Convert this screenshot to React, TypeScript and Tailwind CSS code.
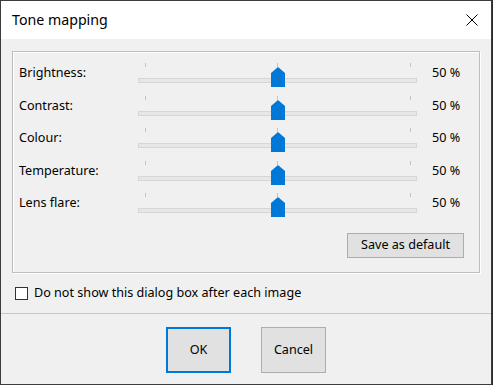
import React from "react";

const rows = ["Brightness:", "Contrast:", "Colour:", "Temperature:", "Lens flare:"];

function Slider() {
  return (
    <div className="relative w-[279px] h-full shrink-0">
      <div className="absolute left-[7px] top-[6px] w-px h-[4px] bg-[#c4c4c4]" />
      <div className="absolute left-[139px] top-[6px] w-px h-[4px] bg-[#c4c4c4]" />
      <div className="absolute left-[272px] top-[6px] w-px h-[4px] bg-[#c4c4c4]" />
      <div className="absolute left-0 right-0 top-[21px] h-[5px] bg-[#e7e7e7] border border-[#d6d6d6]" />
      <svg className="absolute left-[133px] top-[10px]" width="14" height="20" viewBox="0 0 14 20">
        <polygon points="0,6 7,0 14,6 14,20 0,20" fill="#0078d7" />
      </svg>
    </div>
  );
}

export default function App() {
  return (
    <div
      className="w-[493px] h-[385px] bg-[#2b2b2b] text-[12.6px] text-black"
      style={{ fontFamily: '"Noto Sans", "Liberation Sans", sans-serif' }}
    >
      <div className="w-[492px] h-[385px] border border-[#3c3c3c] flex flex-col bg-[#f0f0f0]">
        <div className="h-[38px] bg-white flex items-center justify-between pl-[11px] pr-[13px] shrink-0">
          <span className="text-[14.2px] leading-none">Tone mapping</span>
          <svg width="12" height="12" viewBox="0 0 12 12">
            <path d="M0.5 0.5 L11.5 11.5 M11.5 0.5 L0.5 11.5" stroke="#000" strokeWidth="1" />
          </svg>
        </div>

        <div className="mt-[12px] mx-[11px] h-[222px] border border-[#bdbdbd] shadow-[inset_1px_1px_0_#fff,1px_1px_0_#fff] flex flex-col pt-[5px]">
          {rows.map((r) => (
            <div key={r} className="h-[32.5px] flex items-start shrink-0">
              <div className="w-[125px] pl-[6px] pt-[7px] leading-[18px] shrink-0">{r}</div>
              <Slider />
              <div className="pl-[15px] pt-[7px] leading-[18px]">50 %</div>
            </div>
          ))}
          <div className="flex justify-end pr-[15px] mt-[13px]">
            <button className="w-[117px] h-[25px] bg-[#e1e1e1] border border-[#adadad] text-[12.6px] leading-none">
              Save as default
            </button>
          </div>
        </div>

        <div className="flex items-center h-[40px] pl-[14px] gap-[6px]">
          <div className="w-[13px] h-[13px] bg-white border border-[#333]" />
          <span className="leading-none">Do not show this dialog box after each image</span>
        </div>

        <div className="border-t border-[#c8c8c8] flex-1 flex justify-center gap-[30px] pt-[13px]">
          <button className="w-[65px] h-[46px] bg-[#e1e1e1] border-2 border-[#0078d7] text-[12.6px]">OK</button>
          <button className="w-[65px] h-[46px] bg-[#e1e1e1] border border-[#adadad] text-[12.6px]">Cancel</button>
        </div>
      </div>
    </div>
  );
}
